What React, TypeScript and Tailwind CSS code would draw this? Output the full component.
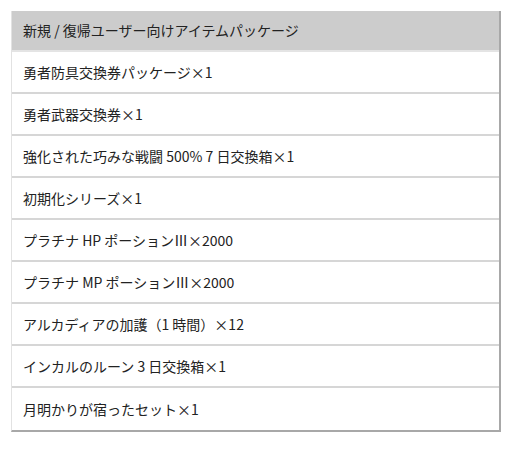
const header = "新規 / 復帰ユーザー向けアイテムパッケージ";

const items = [
  "勇者防具交換券パッケージ×1",
  "勇者武器交換券×1",
  "強化された巧みな戦闘 500% 7 日交換箱×1",
  "初期化シリーズ×1",
  "プラチナ HP ポーションⅢ×2000",
  "プラチナ MP ポーションⅢ×2000",
  "アルカディアの加護（1 時間）×12",
  "インカルのルーン 3 日交換箱×1",
  "月明かりが宿ったセット×1",
];

export default function App() {
  return (
    <div className="h-[449px] w-[512px] bg-white pl-[11px] pt-[11px] font-['Noto_Sans_CJK_JP',sans-serif] text-[14px] text-[#222]">
      <div className="w-[490px] border-b-2 border-l border-r-2 border-b-[#a8a8a8] border-l-[#e2e2e2] border-r-[#a8a8a8]">
        <div className="flex h-[41px] items-center border-b-2 border-[#e4e4e4] bg-[#cccccc] px-[11px]">
          {header}
        </div>
        {items.map((item, i) => (
          <div
            key={item}
            className={
              "flex h-[42px] items-center px-[11px] " +
              (i < items.length - 1 ? "border-b-2 border-[#d6d6d6]" : "")
            }
          >
            {item}
          </div>
        ))}
      </div>
    </div>
  );
}
